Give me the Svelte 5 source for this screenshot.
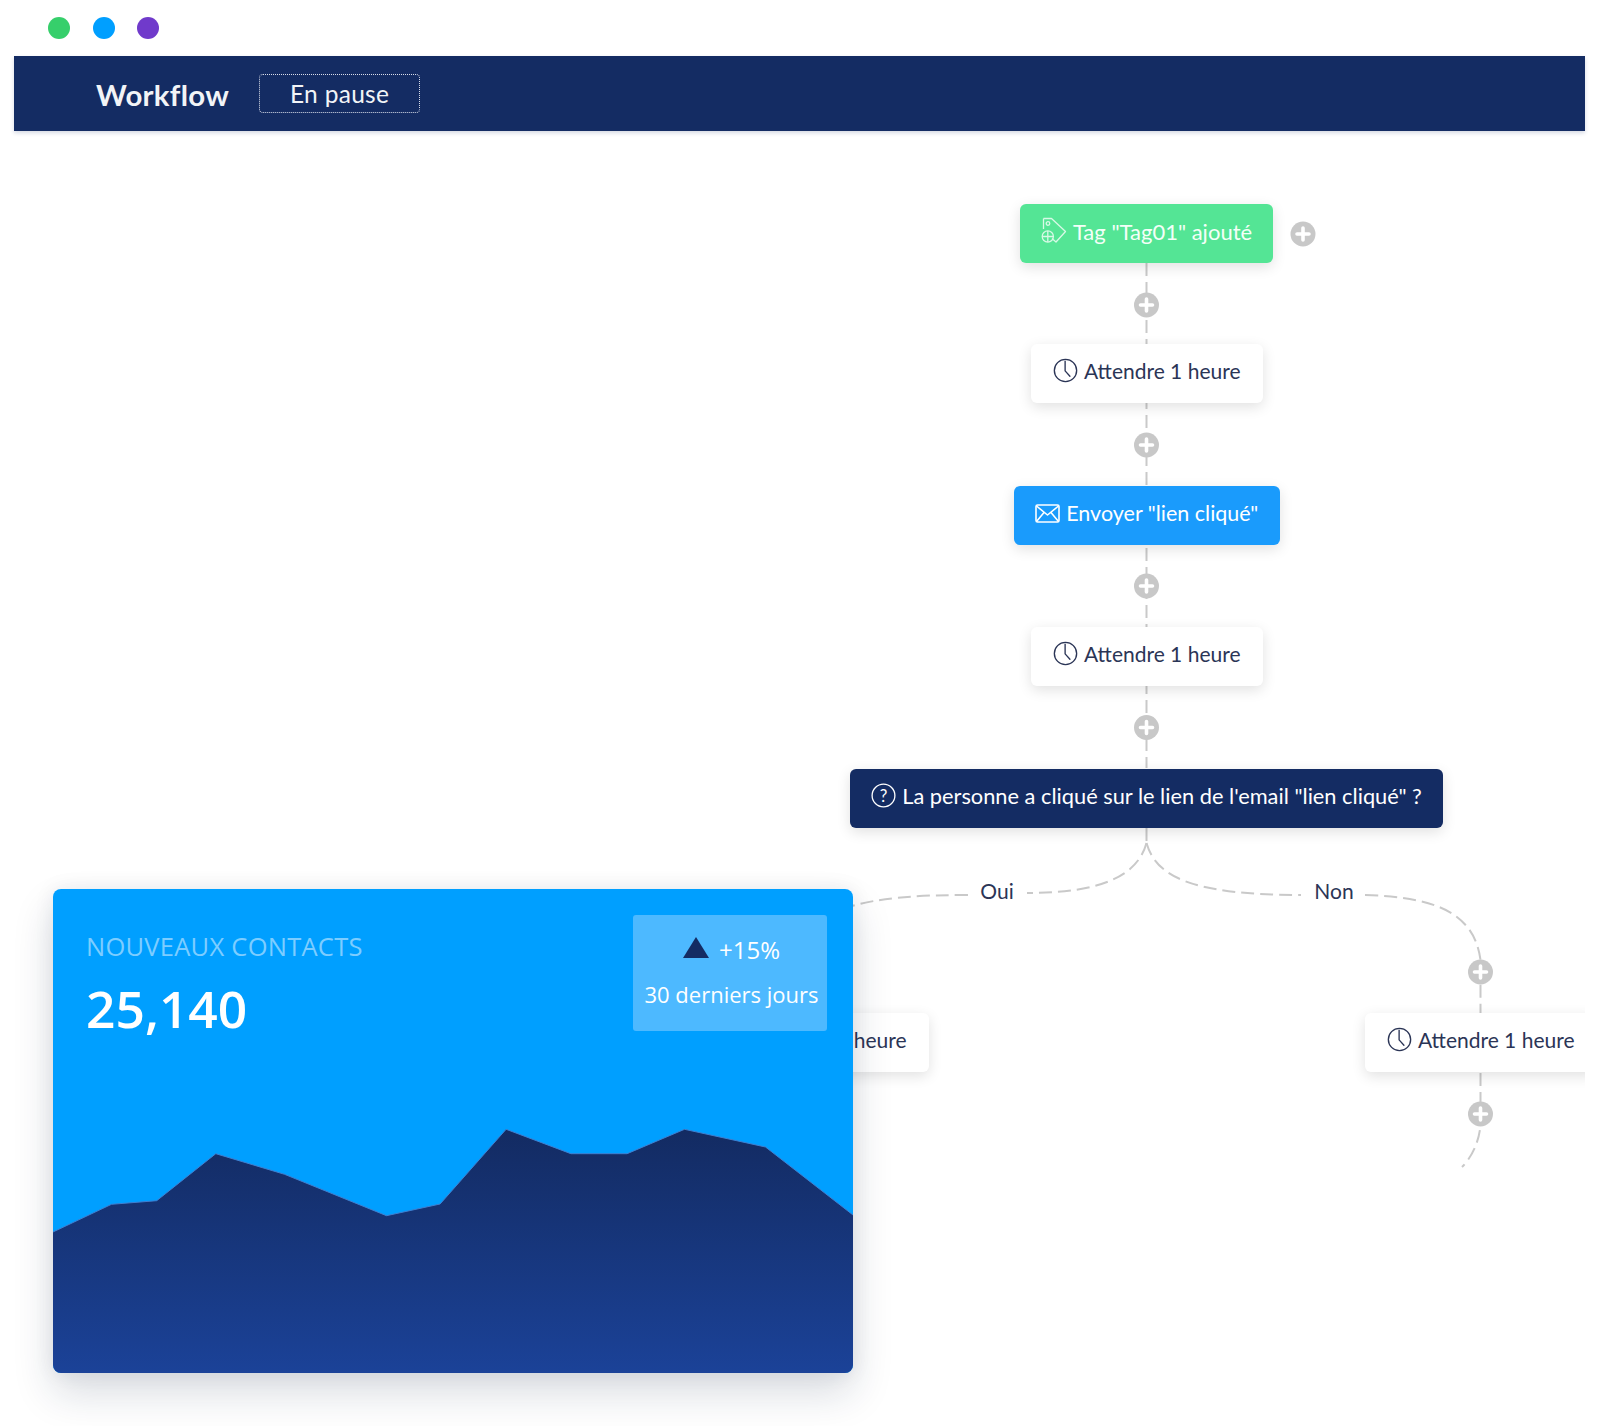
<script>
  const plusButtons = [
    [1303, 234], [1146.5, 305], [1146.5, 445], [1146.5, 586], [1146.5, 727.5],
    [1480.5, 972], [1480.5, 1114]
  ];
  const chart = "53,1232 111.5,1204.3 156.7,1200.7 215.8,1153.7 284.5,1174.3 386.5,1215.7 440.1,1204 506.1,1129.3 570.9,1153.7 627.1,1153.7 684.5,1129.3 765.5,1147 853,1215";
</script>

{#snippet clock()}
  <svg class="icon" width="25" height="25" viewBox="0 0 26 26" fill="none" stroke="#2b3556" stroke-width="1.4" stroke-linecap="round" stroke-linejoin="round">
    <circle cx="13" cy="13" r="11.6" />
    <path d="M12.6 3.2V13.4L17.6 19" />
  </svg>
{/snippet}

<div class="frame">
  <div class="dots">
    <span class="dot green"></span>
    <span class="dot blue"></span>
    <span class="dot purple"></span>
  </div>

  <header class="bar">
    <h1>Workflow</h1>
    <span class="status">En pause</span>
  </header>

  <main class="canvas">
    <svg class="links" width="1571" height="1296" viewBox="14 130 1571 1296" fill="none">
      <g stroke="#c9c9c9" stroke-width="2" stroke-dasharray="13 6">
        <path d="M1146.5 263V768" />
        <path d="M1146.5 828V843" />
        <path d="M1146.5 843C1138 874 1105 893 1027 893" />
        <path d="M968 895C920 895 880 897 845 908" />
        <path d="M1146.5 843C1156 876 1190 895 1301 895" />
        <path d="M1365 895C1430 897 1474 910 1480.5 960V1013" />
        <path d="M1480.5 1073V1125C1479 1142 1472 1157 1462 1167" />
      </g>
      {#each plusButtons as [x, y]}
        <circle cx={x} cy={y} r="12.5" fill="#c8c8c8" />
        <path d="M{x - 6} {y}H{x + 6}M{x} {y - 6}V{y + 6}" stroke="#fff" stroke-width="3.6" stroke-linecap="round" />
      {/each}
    </svg>

    <div class="node tag">
      <svg class="icon" width="26" height="28" viewBox="0 0 26 28" fill="none" stroke="#d8f9e6" stroke-width="1.3" stroke-linejoin="round">
        <path d="M2.5 1.5H10.5L24.5 14.5L15 25L11 21.5" />
        <path d="M2.5 1.5V12" />
        <circle cx="7" cy="6.5" r="1.8" />
        <circle cx="6.8" cy="19.5" r="5.6" />
        <path d="M6.8 14V25M1.2 19.5H12.4" />
      </svg>
      <span>Tag "Tag01" ajouté</span>
    </div>

    <div class="node wait wait1">{@render clock()}<span>Attendre 1 heure</span></div>

    <div class="node send">
      <svg class="icon" width="25" height="19" viewBox="0 0 25 19" fill="none" stroke="#fff" stroke-width="1.6" stroke-linejoin="round">
        <rect x="1" y="1" width="23" height="17" rx="1.5" />
        <path d="M1.5 2L12.5 11L23.5 2M1.5 17.5L9 8.5M23.5 17.5L16 8.5" />
      </svg>
      <span>Envoyer "lien cliqué"</span>
    </div>

    <div class="node wait wait2">{@render clock()}<span>Attendre 1 heure</span></div>

    <div class="node question">
      <svg class="icon" width="25" height="25" viewBox="0 0 25 25" fill="none" stroke="#fff" stroke-width="1.3">
        <circle cx="12.5" cy="12.5" r="11.4" />
        <text x="12.5" y="18.5" text-anchor="middle" class="qmark">?</text>
      </svg>
      <span>La personne a cliqué sur le lien de l'email "lien cliqué" ?</span>
    </div>

    <span class="branch oui">Oui</span>
    <span class="branch non">Non</span>

    <div class="node wait wait3">{@render clock()}<span>Attendre 1 heure</span></div>
    <div class="node wait wait4">{@render clock()}<span>Attendre 1 heure</span></div>
  </main>

  <section class="card">
    <div class="card-top">
      <div class="metric">
        <div class="metric-label">NOUVEAUX CONTACTS</div>
        <div class="metric-value">25,140</div>
      </div>
      <div class="badge">
        <div class="trend"><span class="triangle"></span><span>+15%</span></div>
        <div class="period">30 derniers jours</div>
      </div>
    </div>
    <svg class="chart" width="800" height="244" viewBox="53 1129 800 244">
      <defs>
        <linearGradient id="area" x1="0" y1="0" x2="0" y2="1">
          <stop offset="0" stop-color="#132b62" />
          <stop offset="1" stop-color="#1b4298" />
        </linearGradient>
      </defs>
      <polygon points="{chart} 853,1373 53,1373" fill="url(#area)" />
      <polyline points={chart} fill="none" stroke="#3f7fd0" stroke-width="1" />
    </svg>
  </section>
</div>

<style>
  :global(body) {
    margin: 0;
    background: #fff;
  }
  .frame {
    position: relative;
    width: 1571px;
    height: 1426px;
    margin-left: 14px;
    font-family: Lato, "Noto Sans", sans-serif;
  }
  .dots {
    display: flex;
    align-items: center;
    gap: 22.5px;
    height: 56px;
    padding-left: 34px;
    box-sizing: border-box;
  }
  .dot {
    width: 22px;
    height: 22px;
    border-radius: 50%;
  }
  .green { background: #36cf6b; }
  .blue { background: #009fff; }
  .purple { background: #703acb; }
  .bar {
    display: flex;
    align-items: center;
    height: 75px;
    padding-left: 82px;
    box-sizing: border-box;
    background: #142c63;
    box-shadow: 0 2px 4px rgba(20, 44, 99, 0.18);
    color: #f2f4f7;
  }
  h1 {
    margin: 2px 30px 0 0;
    font-size: 29.4px;
    font-weight: 700;
    letter-spacing: 0.3px;
  }
  .status {
    width: 161px;
    height: 39px;
    box-sizing: border-box;
    display: flex;
    align-items: center;
    justify-content: center;
    border: 1px dotted #d9deea;
    border-radius: 4px;
    font-size: 24.5px;
    letter-spacing: 0.3px;
  }
  .canvas {
    position: absolute;
    left: 0;
    top: 130px;
    width: 1571px;
    height: 1296px;
    overflow: hidden;
  }
  .links {
    position: absolute;
    left: 0;
    top: 0;
  }
  .node {
    position: absolute;
    height: 59px;
    padding-bottom: 5px;
    box-sizing: border-box;
    display: flex;
    align-items: center;
    justify-content: center;
    gap: 6px;
    border-radius: 6px;
    font-size: 21px;
    white-space: nowrap;
    box-shadow: 0 4px 14px rgba(0, 0, 0, 0.12);
  }
  .icon {
    flex: none;
  }
  .tag {
    left: 1006px;
    top: 74px;
    width: 253px;
    background: #54e595;
    color: #f3fff8;
    font-size: 22px;
  }
  .send {
    left: 1000px;
    top: 356px;
    width: 265.5px;
    background: #1a9bfc;
    color: #fff;
    font-size: 21.5px;
  }
  .question {
    left: 836px;
    top: 638.5px;
    width: 593px;
    background: #142c63;
    color: #fff;
    font-size: 21.8px;
  }
  .wait {
    width: 231.5px;
    padding-bottom: 6px;
    background: #fff;
    color: #2b3556;
  }
  .wait1 { left: 1017px; top: 214px; }
  .wait2 { left: 1017px; top: 497px; }
  .wait3 { left: 683px; top: 883px; }
  .wait4 { left: 1351px; top: 883px; }
  .qmark {
    font-family: Lato, sans-serif;
    font-size: 17px;
    fill: #fff;
    stroke: none;
  }
  .branch {
    position: absolute;
    top: 748px;
    transform: translateX(-50%);
    font-size: 21px;
    color: #2b3556;
  }
  .oui { left: 983px; }
  .non { left: 1320px; }
  .card {
    position: absolute;
    left: 39px;
    top: 889px;
    width: 800px;
    height: 484px;
    display: flex;
    flex-direction: column;
    border-radius: 8px;
    overflow: hidden;
    background: #009fff;
    font-family: "Open Sans", sans-serif;
    color: #fff;
    box-shadow: 0 20px 40px rgba(20, 40, 70, 0.16), 0 0 20px rgba(20, 40, 70, 0.08);
  }
  .card-top {
    display: flex;
    justify-content: space-between;
    align-items: flex-start;
    padding: 26px 26px 0 33px;
  }
  .metric-label {
    margin-top: 14px;
    font-size: 25.5px;
    letter-spacing: 0.25px;
    color: #7dcdff;
    white-space: nowrap;
  }
  .metric-value {
    margin-top: 10px;
    font-size: 51.5px;
    font-weight: 600;
    line-height: 70px;
  }
  .badge {
    width: 194px;
    height: 116px;
    box-sizing: border-box;
    padding: 18px 0 0 3px;
    display: flex;
    flex-direction: column;
    align-items: center;
    gap: 13px;
    border-radius: 3px;
    background: #4db9ff;
    font-size: 22px;
  }
  .trend {
    display: flex;
    align-items: center;
    gap: 10px;
    font-size: 24px;
  }
  .triangle {
    width: 0;
    height: 0;
    margin-top: -4px;
    border-left: 13px solid transparent;
    border-right: 13px solid transparent;
    border-bottom: 21px solid #142c63;
  }
  .period {
    white-space: nowrap;
  }
  .chart {
    display: block;
    margin-top: auto;
    flex: none;
  }
</style>
